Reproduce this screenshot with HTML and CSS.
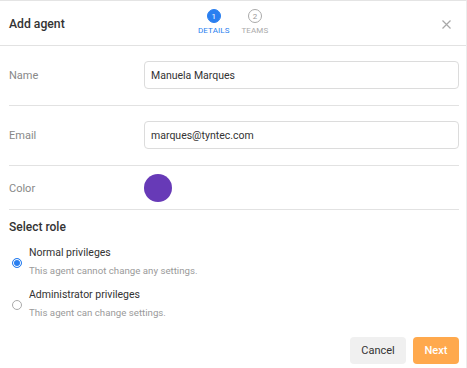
FILE: index.html
```html
<!DOCTYPE html>
<html>
<head>
<meta charset="utf-8">
<link rel="stylesheet" href="styles.css">
</head>
<body>
<div class="dialog">
  <div class="header">
    <div class="title">Add agent</div>
    <div class="stepper">
      <div class="step active"><span class="dot">1</span><span class="lbl">DETAILS</span></div>
      <div class="step"><span class="dot">2</span><span class="lbl">TEAMS</span></div>
    </div>
    <svg class="close" width="9" height="9" viewBox="0 0 9 9"><path d="M0.5 0.5L8.5 8.5M8.5 0.5L0.5 8.5" stroke="#a8a8a8" stroke-width="1.2"/></svg>
  </div>
  <div class="body">
    <div class="row">
      <div class="label">Name</div>
      <div class="input">Manuela Marques</div>
    </div>
    <div class="row">
      <div class="label">Email</div>
      <div class="input">marques@tyntec.com</div>
    </div>
    <div class="row color-row">
      <div class="label">Color</div>
      <div class="swatch"></div>
    </div>
    <div class="section">Select role</div>
    <div class="radio-item">
      <span class="radio checked"></span>
      <div class="radio-text">
        <div class="radio-title">Normal privileges</div>
        <div class="radio-desc">This agent cannot change any settings.</div>
      </div>
    </div>
    <div class="radio-item">
      <span class="radio"></span>
      <div class="radio-text">
        <div class="radio-title">Administrator privileges</div>
        <div class="radio-desc">This agent can change settings.</div>
      </div>
    </div>
  </div>
  <div class="footer">
    <button class="btn cancel">Cancel</button>
    <button class="btn next">Next</button>
  </div>
</div>
</body>
</html>
```
FILE: styles.css
```css
html, body { margin: 0; padding: 0; background: #fff; }
body { font-family: Roboto, "Noto Sans", sans-serif; color: #333; }
.dialog { width: 467px; height: 368px; border-top: 1px solid #e4e4e4; border-right: 1px solid #ececec; box-sizing: border-box; position: relative; }
.header { height: 44px; border-bottom: 1px solid #e2e2e2; display: flex; align-items: center; padding: 0 9px; position: relative; }
.title { font-size: 12.2px; font-weight: 500; color: #333; flex: 1; padding-top: 1px; }
.stepper { position: absolute; left: 198px; top: 8px; display: flex; gap: 12px; }
.step { display: flex; flex-direction: column; align-items: center; }
.dot { width: 12px; height: 12px; border-radius: 50%; border: 1px solid #aaa; color: #999; font-size: 8px; display: flex; align-items: center; justify-content: center; box-sizing: content-box; }
.step.active .dot { background: #2a7ff0; border-color: #2a7ff0; color: #fff; }
.lbl { font-size: 8px; color: #aaa; margin-top: 3px; letter-spacing: 0.1px; }
.step.active .lbl { color: #2a7ff0; }
.close { margin-right: 6px; margin-top: 2px; }
.body { padding: 0 7px 0 9px; }
.row { display: flex; align-items: center; padding: 15px 0 16px; border-bottom: 1px solid #e2e2e2; }
.label { width: 135px; font-size: 11px; color: #888; }
.input { flex: 1; height: 28px; box-sizing: border-box; border: 1px solid #dcdcdc; border-radius: 4px; padding: 0 6px; display: flex; align-items: center; font-size: 10.5px; color: #333; }
.color-row { padding: 8px 0 7px; }
.swatch { width: 28px; height: 28px; border-radius: 50%; background: #673ab7; }
.section { font-size: 12px; font-weight: 500; color: #333; margin-top: 10px; }
.radio-item { display: flex; align-items: center; margin-top: 12px; }
.radio-item + .radio-item { margin-top: 12px; }
.radio { width: 8px; height: 8px; border-radius: 50%; border: 1px solid #aaa; margin: 4px 7px 0 3px; box-sizing: content-box; }
.radio.checked { border-color: #2a7ff0; background: #2a7ff0; box-shadow: inset 0 0 0 1px #fff; }
.radio-title { font-size: 10.5px; color: #333; }
.radio-desc { font-size: 9.7px; color: #9a9a9a; margin-top: 6px; }
.footer { position: absolute; right: 7px; bottom: 4px; display: flex; gap: 7px; }
.btn { border: none; border-radius: 4px; height: 27px; font-family: Roboto, sans-serif; font-size: 11px; padding: 0; }
.cancel { width: 56px; background: #f0f0f0; color: #333; }
.next { width: 46px; background: #ffa94d; color: #fff; font-weight: 500; }
```
